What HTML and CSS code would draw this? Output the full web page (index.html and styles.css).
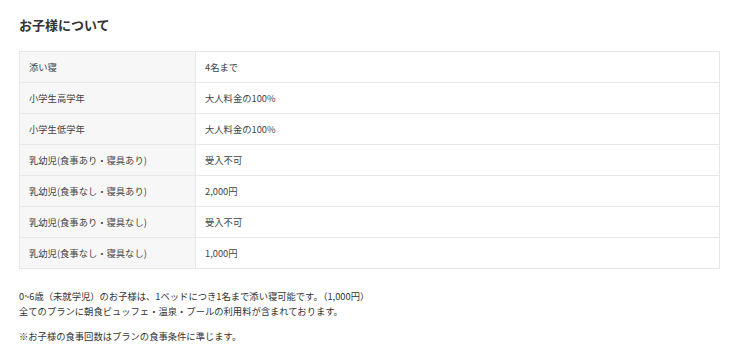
FILE: index.html
```html
<!DOCTYPE html>
<html lang="ja">
<head>
<meta charset="utf-8">
<link rel="stylesheet" href="styles.css">
</head>
<body>
<section class="kids">
  <h2 class="kids-title">お子様について</h2>
  <table class="kids-table">
    <colgroup><col class="col-label"><col></colgroup>
    <tr><th>添い寝</th><td>4名まで</td></tr>
    <tr><th>小学生高学年</th><td>大人料金の100%</td></tr>
    <tr><th>小学生低学年</th><td>大人料金の100%</td></tr>
    <tr><th>乳幼児(食事あり・寝具あり)</th><td>受入不可</td></tr>
    <tr><th>乳幼児(食事なし・寝具あり)</th><td>2,000円</td></tr>
    <tr><th>乳幼児(食事あり・寝具なし)</th><td>受入不可</td></tr>
    <tr><th>乳幼児(食事なし・寝具なし)</th><td>1,000円</td></tr>
  </table>
  <p class="kids-note first">0~6歳（未就学児）のお子様は、1ベッドにつき1名まで添い寝可能です。（1,000円）<br>全てのプランに朝食ビュッフェ・温泉・プールの利用料が含まれております。</p>
  <p class="kids-note">※お子様の食事回数はプランの食事条件に準じます。</p>
</section>
</body>
</html>
```
FILE: styles.css
```css
html, body {
  margin: 0;
  padding: 0;
  background: #fff;
}
body {
  font-family: "Noto Sans CJK JP", "Noto Sans", sans-serif;
  color: #333;
}
.kids {
  padding: 16px 21px 0 19px;
}
.kids-title {
  margin: 0 0 17px;
  font-size: 13px;
  line-height: 18px;
  font-weight: bold;
  color: #333;
}
.kids-table {
  width: 701px;
  border-collapse: collapse;
  table-layout: fixed;
}
.col-label {
  width: 176px;
}
.kids-table th,
.kids-table td {
  border: 1px solid #e8e8e8;
  font-size: 9.3px;
  line-height: 15px;
  padding: 8px 9px 7px;
  text-align: left;
  font-weight: normal;
  color: #444;
}
.kids-table th {
  background: #f7f7f7;
}
.kids-table td {
  background: #fff;
}
.kids-note {
  margin: 10px 0 0;
  font-size: 9.3px;
  line-height: 15px;
  color: #333;
}
.kids-note.first {
  margin-top: 20px;
}
```
